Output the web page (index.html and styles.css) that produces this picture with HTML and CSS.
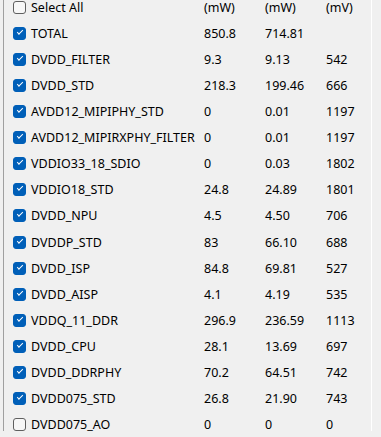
FILE: index.html
```html
<!DOCTYPE html>
<html lang="en">
<head>
  <meta charset="UTF-8">
  <title>Rails</title>
  <link rel="stylesheet" href="styles.css">
</head>
<body>
  <div class="panel">
    <div class="row">
      <label class="name"><span class="box"></span>Select All</label>
      <span>(mW)</span><span>(mW)</span><span>(mV)</span>
    </div>
    <div class="row"><label class="name"><span class="box on"></span>TOTAL</label><span>850.8</span><span>714.81</span><span></span></div>
    <div class="row"><label class="name"><span class="box on"></span>DVDD_FILTER</label><span>9.3</span><span>9.13</span><span>542</span></div>
    <div class="row"><label class="name"><span class="box on"></span>DVDD_STD</label><span>218.3</span><span>199.46</span><span>666</span></div>
    <div class="row"><label class="name"><span class="box on"></span>AVDD12_MIPIPHY_STD</label><span>0</span><span>0.01</span><span>1197</span></div>
    <div class="row"><label class="name"><span class="box on"></span>AVDD12_MIPIRXPHY_FILTER</label><span>0</span><span>0.01</span><span>1197</span></div>
    <div class="row"><label class="name"><span class="box on"></span>VDDIO33_18_SDIO</label><span>0</span><span>0.03</span><span>1802</span></div>
    <div class="row"><label class="name"><span class="box on"></span>VDDIO18_STD</label><span>24.8</span><span>24.89</span><span>1801</span></div>
    <div class="row"><label class="name"><span class="box on"></span>DVDD_NPU</label><span>4.5</span><span>4.50</span><span>706</span></div>
    <div class="row"><label class="name"><span class="box on"></span>DVDDP_STD</label><span>83</span><span>66.10</span><span>688</span></div>
    <div class="row"><label class="name"><span class="box on"></span>DVDD_ISP</label><span>84.8</span><span>69.81</span><span>527</span></div>
    <div class="row"><label class="name"><span class="box on"></span>DVDD_AISP</label><span>4.1</span><span>4.19</span><span>535</span></div>
    <div class="row"><label class="name"><span class="box on"></span>VDDQ_11_DDR</label><span>296.9</span><span>236.59</span><span>1113</span></div>
    <div class="row"><label class="name"><span class="box on"></span>DVDD_CPU</label><span>28.1</span><span>13.69</span><span>697</span></div>
    <div class="row"><label class="name"><span class="box on"></span>DVDD_DDRPHY</label><span>70.2</span><span>64.51</span><span>742</span></div>
    <div class="row"><label class="name"><span class="box on"></span>DVDD075_STD</label><span>26.8</span><span>21.90</span><span>743</span></div>
    <div class="row"><label class="name"><span class="box"></span>DVDD075_AO</label><span>0</span><span>0</span><span>0</span></div>
  </div>
</body>
</html>
```
FILE: styles.css
```css
html, body {
  margin: 0;
  padding: 0;
  background-color: #f0f0f0;
  height: 100%;
}

body {
  font-family: 'Noto Sans', 'Open Sans', sans-serif;
  font-size: 12.5px;
  color: #000000;
  overflow: hidden;
}

.panel {
  margin-left: 3px;
  width: 369px;
  height: 100%;
  border-left: 1px solid #a0a0a0;
  border-right: 1px solid #ffffff;
  box-sizing: border-box;
}

.row {
  display: grid;
  grid-template-columns: 200px 61px 61px auto;
  align-items: center;
  height: 26.12px;
}

/* top row is partly scrolled out of view */
.row:first-child {
  margin-top: -6px;
}

.name {
  display: flex;
  align-items: center;
  gap: 5px;
  padding-left: 9px;
  white-space: nowrap;
}

.box {
  width: 11px;
  height: 11px;
  border: 1px solid #5f5f5f;
  border-radius: 3px;
  background-color: #f7f7f7;
  flex: none;
  position: relative;
}

.box.on {
  background-color: #005fb8;
  border-color: #005fb8;
}

.box.on::after {
  content: "";
  position: absolute;
  left: 3px;
  top: 2px;
  width: 5px;
  height: 2px;
  border-left: 1px solid #ffffff;
  border-bottom: 1px solid #ffffff;
  transform: rotate(-45deg);
}
```
